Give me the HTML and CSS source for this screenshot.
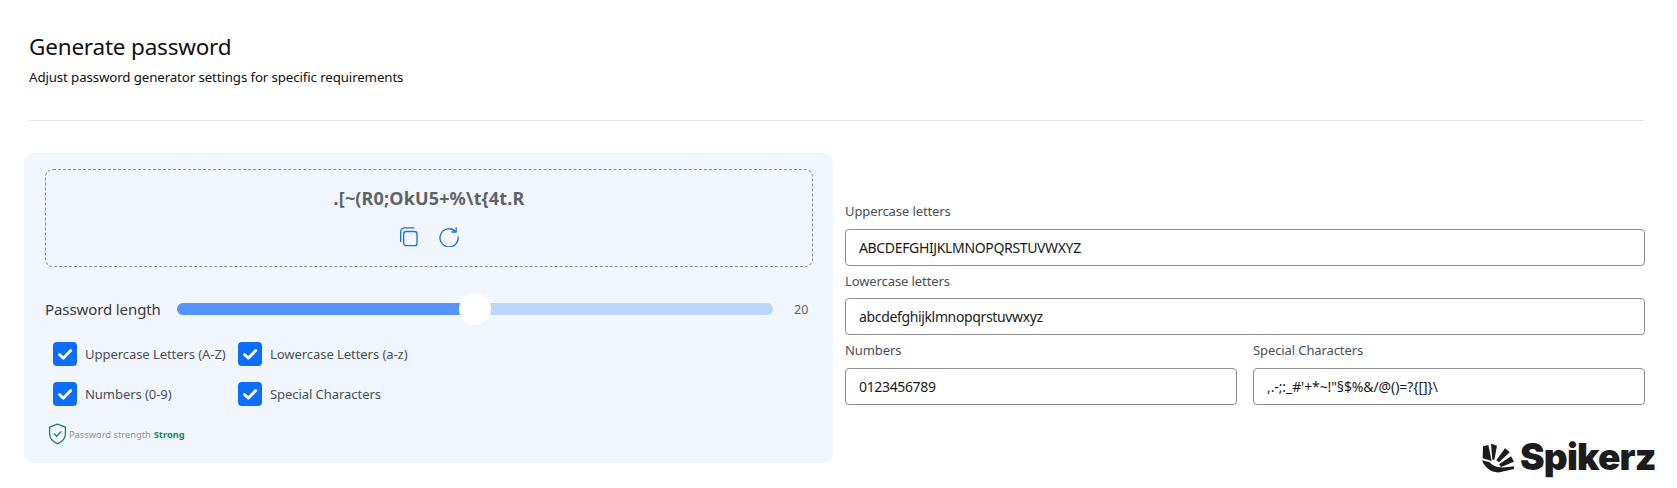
FILE: index.html
```html
<!DOCTYPE html>
<html lang="en">
<head>
<meta charset="utf-8">
<title>Generate password</title>
<link rel="stylesheet" href="styles.css">
</head>
<body>
<main class="page">
  <header class="head">
    <h1 class="title">Generate password</h1>
    <p class="subtitle">Adjust password generator settings for specific requirements</p>
  </header>
  <hr class="rule">
  <section class="columns">
    <div class="card">
      <div class="output">
        <div class="password">.[~(R0;OkU5+%\t{4t.R</div>
        <div class="actions">
          <svg class="icon" viewBox="0 0 24 24" fill="none" stroke="currentColor" stroke-width="1.6" stroke-linecap="round" stroke-linejoin="round"><rect x="5.6" y="5.4" width="16" height="17" rx="3"/><path d="M2 17.5V6a5 5 0 0 1 5-5h11"/></svg>
          <svg class="icon" viewBox="0 0 24 24" fill="none" stroke="currentColor" stroke-width="1.6" stroke-linecap="round" stroke-linejoin="round"><path d="M20 5.5A10.9 10.9 0 1 0 23 12"/><path d="M20.6 1v5h-5"/></svg>
        </div>
      </div>
      <div class="length">
        <span class="length-label">Password length</span>
        <div class="slider"><div class="slider-fill"></div><div class="slider-thumb"></div></div>
        <span class="length-value">20</span>
      </div>
      <div class="options">
        <label class="option"><span class="box"><svg viewBox="0 0 24 24" fill="none" stroke="#fff" stroke-width="2.8" stroke-linecap="round" stroke-linejoin="round"><path d="M6.5 12.5l3.8 3.8 7.4-7.8"/></svg></span>Uppercase Letters (A-Z)</label>
        <label class="option"><span class="box"><svg viewBox="0 0 24 24" fill="none" stroke="#fff" stroke-width="2.8" stroke-linecap="round" stroke-linejoin="round"><path d="M6.5 12.5l3.8 3.8 7.4-7.8"/></svg></span>Lowercase Letters (a-z)</label>
        <label class="option"><span class="box"><svg viewBox="0 0 24 24" fill="none" stroke="#fff" stroke-width="2.8" stroke-linecap="round" stroke-linejoin="round"><path d="M6.5 12.5l3.8 3.8 7.4-7.8"/></svg></span>Numbers (0-9)</label>
        <label class="option"><span class="box"><svg viewBox="0 0 24 24" fill="none" stroke="#fff" stroke-width="2.8" stroke-linecap="round" stroke-linejoin="round"><path d="M6.5 12.5l3.8 3.8 7.4-7.8"/></svg></span>Special Characters</label>
      </div>
      <div class="strength">
        <svg class="shield" viewBox="0 0 20 24" fill="none" stroke="#198754" stroke-width="1.4" stroke-linecap="round" stroke-linejoin="round"><path d="M10 1.2l8.6 3.2v7.2c0 5-3.6 8.8-8.6 11.2-5-2.4-8.6-6.2-8.6-11.2V4.400z"/><path d="M6.300 11.800l2.700 2.700 4.800-5"/></svg>
        <span class="strength-label">Password strength</span>
        <strong class="strength-value">Strong</strong>
      </div>
    </div>
    <form class="fields">
      <div class="field">
        <label class="field-label">Uppercase letters</label>
        <input class="field-input" value="ABCDEFGHIJKLMNOPQRSTUVWXYZ">
      </div>
      <div class="field">
        <label class="field-label">Lowercase letters</label>
        <input class="field-input" value="abcdefghijklmnopqrstuvwxyz">
      </div>
      <div class="field-row">
        <div class="field">
          <label class="field-label">Numbers</label>
          <input class="field-input" value="0123456789">
        </div>
        <div class="field">
          <label class="field-label">Special Characters</label>
          <input class="field-input field-input-symbols" value=",.-;:_#'+*~!&quot;§$%&amp;/@()=?{[]}\">
        </div>
      </div>
    </form>
  </section>
</main>
<div class="brand">
  <svg class="brand-mark" viewBox="5 22 96 90" fill="#1c1c1c"><path d="M8 32L24 28L34 76L7 68z"/><path d="M32 24L50 30L42 72L36 72z"/><path d="M74 38L88 50L56 80L48 74z"/><path d="M92 62L101 78L62 94L56 86z"/><path d="M5 74L28 80C38 92 54 100 101 92V100L58 110C34 112 14 98 5 74z"/></svg>
  <span class="brand-name">Spikerz</span>
</div>
</body>
</html>
```

FILE: styles.css
```css
* { box-sizing: border-box; }
html, body { margin: 0; padding: 0; }
body {
  height: 488px;
  overflow: hidden;
  background: #fff;
  color: #212529;
  font-family: "Noto Sans", "Open Sans", sans-serif;
  position: relative;
}
.page { padding: 33px 32px 0 24px; }
.head { padding-left: 5px; height: 87px; }
.title {
  margin: 0;
  font-size: 22.500px;
  line-height: 28px;
  font-weight: 400;
  letter-spacing: -0.2px;
  color: #111;
}
.subtitle {
  margin: 7px 0 0;
  font-size: 13.300px;
  line-height: 18px;
  letter-spacing: -0.12px;
  color: #111;
}
.rule {
  margin: 0 0 32px 5px;
  border: 0;
  border-top: 1px solid #e3e3e3;
}
.columns { display: flex; gap: 12px; align-items: flex-start; }
.card {
  flex: 0 0 809px;
  height: 310px;
  padding: 16px 20px 0 21px;
  background: #f2f7ff;
  border-radius: 10px;
}
.output {
  height: 98px;
  border: 1px dashed #8a8f96;
  border-radius: 8px;
  display: flex;
  flex-direction: column;
  align-items: center;
  padding-top: 17px;
}
.password {
  font-size: 18px;
  line-height: 22px;
  font-weight: 700;
  letter-spacing: 0.15px;
  color: #5f6368;
}
.actions { display: flex; gap: 20px; margin-top: 18px; color: #1e6fe0; }
.icon { width: 20px; height: 20px; display: block; }
.length {
  display: flex;
  align-items: center;
  margin: 26px 0 0;
  height: 32px;
}
.length-label {
  flex: 0 0 132px;
  font-size: 15px;
  letter-spacing: -0.1px;
  color: #343a40;
}
.slider {
  position: relative;
  flex: 0 0 596px;
  height: 12px;
  border-radius: 6px;
  background: #bdd6fd;
}
.slider-fill {
  width: 50%;
  height: 100%;
  border-radius: 6px 0 0 6px;
  background: #5794fb;
}
.slider-thumb {
  position: absolute;
  left: 282px;
  top: -10px;
  width: 32px;
  height: 32px;
  border-radius: 50%;
  background: #fff;
}
.length-value {
  margin-left: 21px;
  font-size: 12.500px;
  color: #5f6368;
}
.options {
  display: grid;
  grid-template-columns: 185px auto;
  justify-content: start;
  row-gap: 16px;
  margin: 17px 0 0 8px;
}
.option {
  display: flex;
  align-items: center;
  gap: 8px;
  height: 24px;
  font-size: 13.100px;
  letter-spacing: -0.1px;
  color: #495057;
  white-space: nowrap;
}
.box {
  flex: 0 0 24px;
  height: 24px;
  border-radius: 4px;
  background: #0d6efd;
}
.box svg { display: block; width: 24px; height: 24px; }
.strength {
  display: flex;
  align-items: center;
  margin: 17px 0 0 3px;
  height: 22px;
  font-size: 9.300px;
}
.shield { width: 19px; height: 22px; margin-right: 2px; }
.strength-label { color: #8d9399; }
.strength-value { margin-left: 3px; color: #198754; font-weight: 700; }
.fields {
  flex: 1;
  display: flex;
  flex-direction: column;
  padding-top: 48px;
}
.field-row { display: grid; grid-template-columns: 1fr 1fr; gap: 16px; }
.field { display: flex; flex-direction: column; }
.field-label {
  height: 27.500px;
  padding-top: 1px;
  font-size: 13px;
  line-height: 18px;
  letter-spacing: -0.1px;
  color: #495057;
}
.field-input {
  width: 100%;
  height: 37px;
  margin-bottom: 5px;
  padding: 0 13px;
  border: 1px solid #8d8d8d;
  border-radius: 4px;
  background: #fff;
  font: 400 14px "Noto Sans", sans-serif;
  letter-spacing: -0.35px;
  color: #1a1a1a;
}
.field-input-symbols { letter-spacing: -0.1px; }
.brand {
  position: absolute;
  left: 1482px;
  top: 437px;
  display: flex;
  align-items: center;
  gap: 6px;
}
.brand-mark { width: 32px; height: 30px; margin-top: 2px; display: block; }
.brand-name {
  font-family: Inter, "Liberation Sans", sans-serif;
  font-size: 37px;
  line-height: 40px;
  font-weight: 900;
  letter-spacing: -0.8px;
  color: #1c1c1c;
}
```
